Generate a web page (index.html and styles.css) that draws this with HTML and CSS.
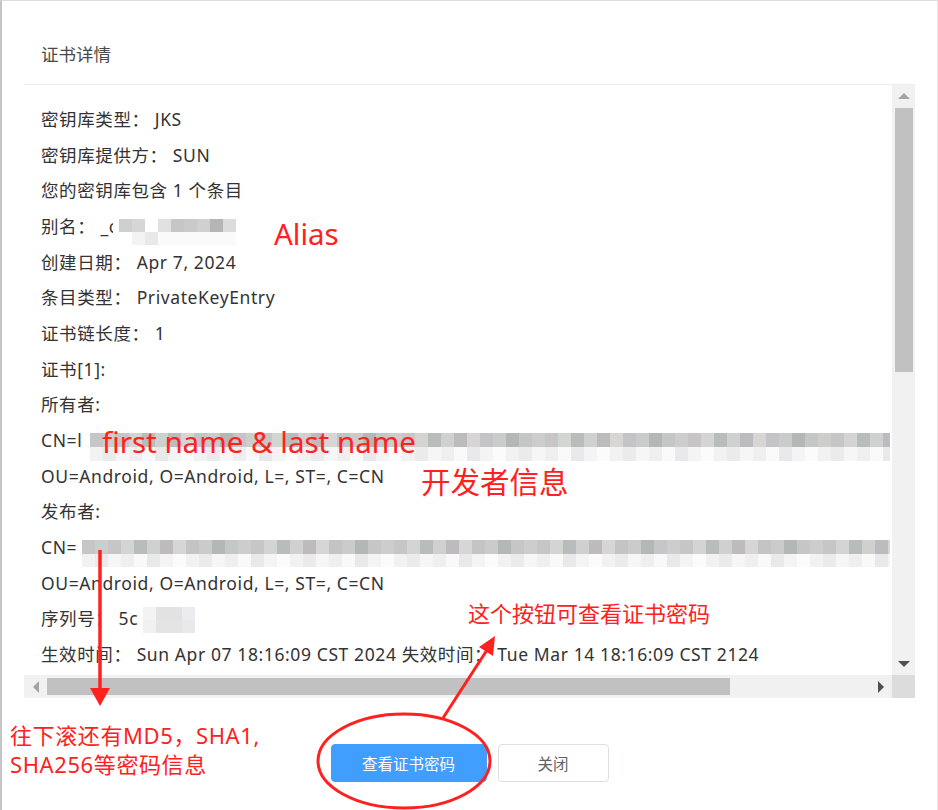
FILE: index.html
```html
<!DOCTYPE html>
<html lang="zh-CN">
<head>
<meta charset="utf-8">
<title>证书详情</title>
<link rel="stylesheet" href="styles.css">
</head>
<body>
<div class="dialog">
  <div class="header"><span class="title">证书详情</span></div>
  <div class="body">
    <div class="scrollbox">
      <div class="viewport">
        <div class="content">
          <div class="line">密钥库类型： JKS</div>
          <div class="line">密钥库提供方： SUN</div>
          <div class="line">您的密钥库包含 1 个条目</div>
          <div class="line">别名： _c</div>
          <div class="line">创建日期： Apr 7, 2024</div>
          <div class="line">条目类型： PrivateKeyEntry</div>
          <div class="line">证书链长度： 1</div>
          <div class="line">证书[1]:</div>
          <div class="line">所有者:</div>
          <div class="line">CN=l</div>
          <div class="line">OU=Android, O=Android, L=, ST=, C=CN</div>
          <div class="line">发布者:</div>
          <div class="line">CN=</div>
          <div class="line">OU=Android, O=Android, L=, ST=, C=CN</div>
          <div class="line">序列号： 5c</div>
          <div class="line">生效时间： Sun Apr 07 18:16:09 CST 2024 失效时间： Tue Mar 14 18:16:09 CST 2124</div>
        </div>
      </div>
      <div class="vbar">
        <div class="sbtn"><span class="tri tri-up"></span></div>
        <div class="vthumb"></div>
        <div class="vrest"></div>
        <div class="sbtn"><span class="tri tri-down"></span></div>
      </div>
      <div class="hbar">
        <div class="sbtn"><span class="tri tri-left"></span></div>
        <div class="hthumb"></div>
        <div class="hrest"></div>
        <div class="sbtn"><span class="tri tri-right"></span></div>
      </div>
      <div class="corner"></div>
    </div>
  </div>
  <div class="footer">
    <button class="btn btn-primary">查看证书密码</button>
    <button class="btn btn-default">关闭</button>
  </div>
</div>

<div class="overlay">
  <div class="mosaic m-alias"><div class="mrow top"></div><div class="mrow bot"></div></div>
  <div class="mosaic m-owner"><div class="mrow top"></div><div class="mrow bot"></div></div>
  <div class="mosaic m-issuer"><div class="mrow top"></div><div class="mrow bot"></div></div>
  <div class="mosaic m-serial"><div class="mrow top"></div><div class="mrow bot"></div></div>

  <div class="note note-alias">Alias</div>
  <div class="note note-name">first name &amp; last name</div>
  <div class="note note-dev">开发者信息</div>
  <div class="note note-btn">这个按钮可查看证书密码</div>
  <div class="note note-scroll">往下滚还有MD5，SHA1,<br>SHA256等密码信息</div>

  <svg class="marks" width="938" height="810" viewBox="0 0 938 810">
    <line x1="100" y1="550" x2="100" y2="692" stroke="#ff2020" stroke-width="3.5"/>
    <polygon points="90,688 110,688 100,706" fill="#ff2020"/>
    <line x1="443" y1="718" x2="487" y2="650" stroke="#ff2020" stroke-width="3"/>
    <polygon points="495,636 479,647 493,656" fill="#ff2020"/>
    <ellipse cx="404" cy="761" rx="86" ry="47" fill="none" stroke="#ff2020" stroke-width="3"/>
  </svg>
</div>
</body>
</html>
```

FILE: styles.css
```css
html, body {
  margin: 0;
  padding: 0;
  background: #ffffff;
}

body {
  position: relative;
  width: 938px;
  height: 810px;
  overflow: hidden;
  font-family: "Noto Sans", "Noto Sans CJK SC", sans-serif;
}

.dialog {
  box-sizing: border-box;
  width: 938px;
  height: 810px;
  border-top: 1px solid #dcdcdc;
  border-left: 2px solid #c4c4c4;
  border-right: 1px solid #e8e8e8;
  display: flex;
  flex-direction: column;
}

.header {
  box-sizing: border-box;
  height: 83px;
  padding: 39px 0 0 39px;
}

.title {
  display: block;
  font-family: "Noto Sans CJK SC", sans-serif;
  font-size: 17.5px;
  line-height: 28px;
  color: #4a4a4a;
}

.body {
  padding: 0 22px;
}

.scrollbox {
  box-sizing: border-box;
  height: 614px;
  border-top: 1px solid #ebeef5;
  display: grid;
  grid-template-columns: 1fr 23px;
  grid-template-rows: 1fr 23px;
}

.viewport {
  overflow: hidden;
  min-width: 0;
  min-height: 0;
}

.content {
  padding: 17px 0 0 17px;
}

.line {
  height: 35.67px;
  line-height: 35.67px;
  font-size: 17.5px;
  letter-spacing: 0.6px;
  color: #333;
  white-space: nowrap;
}

.vbar {
  background: #f1f1f1;
  display: flex;
  flex-direction: column;
}

.hbar {
  background: #f1f1f1;
  display: flex;
  flex-direction: row;
}

.sbtn {
  width: 23px;
  height: 23px;
  flex: none;
  display: flex;
  align-items: center;
  justify-content: center;
}

.vthumb {
  height: 264px;
  margin: 0 2px 0 3px;
  background: #c1c1c1;
  flex: none;
}

.vrest, .hrest {
  flex: 1;
}

.hthumb {
  width: 683px;
  margin: 3px 0;
  background: #c1c1c1;
  flex: none;
}

.corner {
  background: #dcdcdc;
}

.tri {
  width: 0;
  height: 0;
  display: block;
}

.tri-up {
  border-left: 6px solid transparent;
  border-right: 6px solid transparent;
  border-bottom: 6px solid #a3a3a3;
  margin-top: -2px;
}

.tri-down {
  border-left: 6px solid transparent;
  border-right: 6px solid transparent;
  border-top: 6px solid #505050;
}

.tri-left {
  border-top: 6px solid transparent;
  border-bottom: 6px solid transparent;
  border-right: 6px solid #a3a3a3;
}

.tri-right {
  border-top: 6px solid transparent;
  border-bottom: 6px solid transparent;
  border-left: 6px solid #505050;
}

.footer {
  padding-top: 46px;
  display: flex;
  justify-content: center;
  gap: 11px;
}

.btn {
  box-sizing: border-box;
  height: 38px;
  border-radius: 4px;
  font-family: "Noto Sans CJK SC", sans-serif;
  font-size: 15.5px;
  padding: 0;
  cursor: pointer;
}

.btn-primary {
  width: 156px;
  background: #409eff;
  border: 1px solid #409eff;
  color: #ffffff;
}

.btn-default {
  width: 111px;
  background: #ffffff;
  border: 1px solid #dcdfe6;
  color: #606266;
}

/* overlay: blurred regions and red annotations drawn on top of the screenshot */
.overlay {
  position: absolute;
  left: 0;
  top: 0;
  width: 938px;
  height: 810px;
  pointer-events: none;
}

.mosaic {
  position: absolute;
  display: flex;
  flex-direction: column;
}

.mrow {
  flex: 1;
}

.m-owner { left: 90px; top: 433px; width: 800px; height: 28px; }
.m-issuer { left: 82px; top: 540px; width: 808px; height: 27px; }
.m-alias { left: 113px; top: 219px; width: 123px; height: 26px; }
.m-serial { left: 143px; top: 607px; width: 52px; height: 26px; }

.m-owner .top, .m-issuer .top {
  background: repeating-linear-gradient(90deg,
    #c5c6c8 0 13px, #cdcdcc 13px 26px, #c8c5c6 26px 39px, #d3d5d3 39px 52px,
    #b8bcba 52px 65px, #cfd1d1 65px 78px, #bdbbbe 78px 91px, #d8d6d5 91px 104px,
    #c4c4c6 104px 117px, #cacbcb 117px 130px, #b3b7b6 130px 143px);
}

.m-owner .bot, .m-issuer .bot {
  background: repeating-linear-gradient(90deg,
    #f2f2f2 0 13px, #ebebeb 13px 26px, #f6f6f6 26px 39px, #efefef 39px 52px,
    #f9f9f9 52px 65px, #e9e9eb 65px 78px, #f4f4f4 78px 91px, #fbfbfb 91px 104px);
}

.m-alias .top {
  background: linear-gradient(90deg,
    #ffffff 0 6px, #cdd0d2 6px 19px, #d6d6d6 19px 32px, #ffffff 32px 45px,
    #e3e0e0 45px 58px, #c6c6c6 58px 71px, #cacaca 71px 84px, #d0d0d0 84px 97px,
    #b7b5b3 97px 110px, #dcdcde 110px 123px);
}

.m-alias .bot {
  background: linear-gradient(90deg,
    #ffffff 0 19px, #f3f3f3 19px 32px, #e9e9e9 32px 45px, #fafafa 45px 123px);
}

.m-serial .top {
  background: linear-gradient(90deg, #f3f3f3 0 13px, #e2e2e2 13px 39px, #ececee 39px 52px);
}

.m-serial .bot {
  background: linear-gradient(90deg, #f0f0f0 0 13px, #e4e4e6 13px 39px, #e9e9ec 39px 52px);
}

.note {
  position: absolute;
  color: #ff2020;
  line-height: 1;
  white-space: nowrap;
  font-family: "Noto Sans", "Noto Sans CJK SC", sans-serif;
}

.note-alias { left: 274px; top: 219px; font-size: 29.5px; }
.note-name { left: 102px; top: 427px; font-size: 29.5px; }
.note-dev { left: 421px; top: 467px; font-size: 29.5px; }
.note-btn { left: 468px; top: 602px; font-size: 22px; }
.note-scroll { left: 10px; top: 721px; font-size: 22px; line-height: 29px; letter-spacing: 0.6px; }

.marks {
  position: absolute;
  left: 0;
  top: 0;
}
```
